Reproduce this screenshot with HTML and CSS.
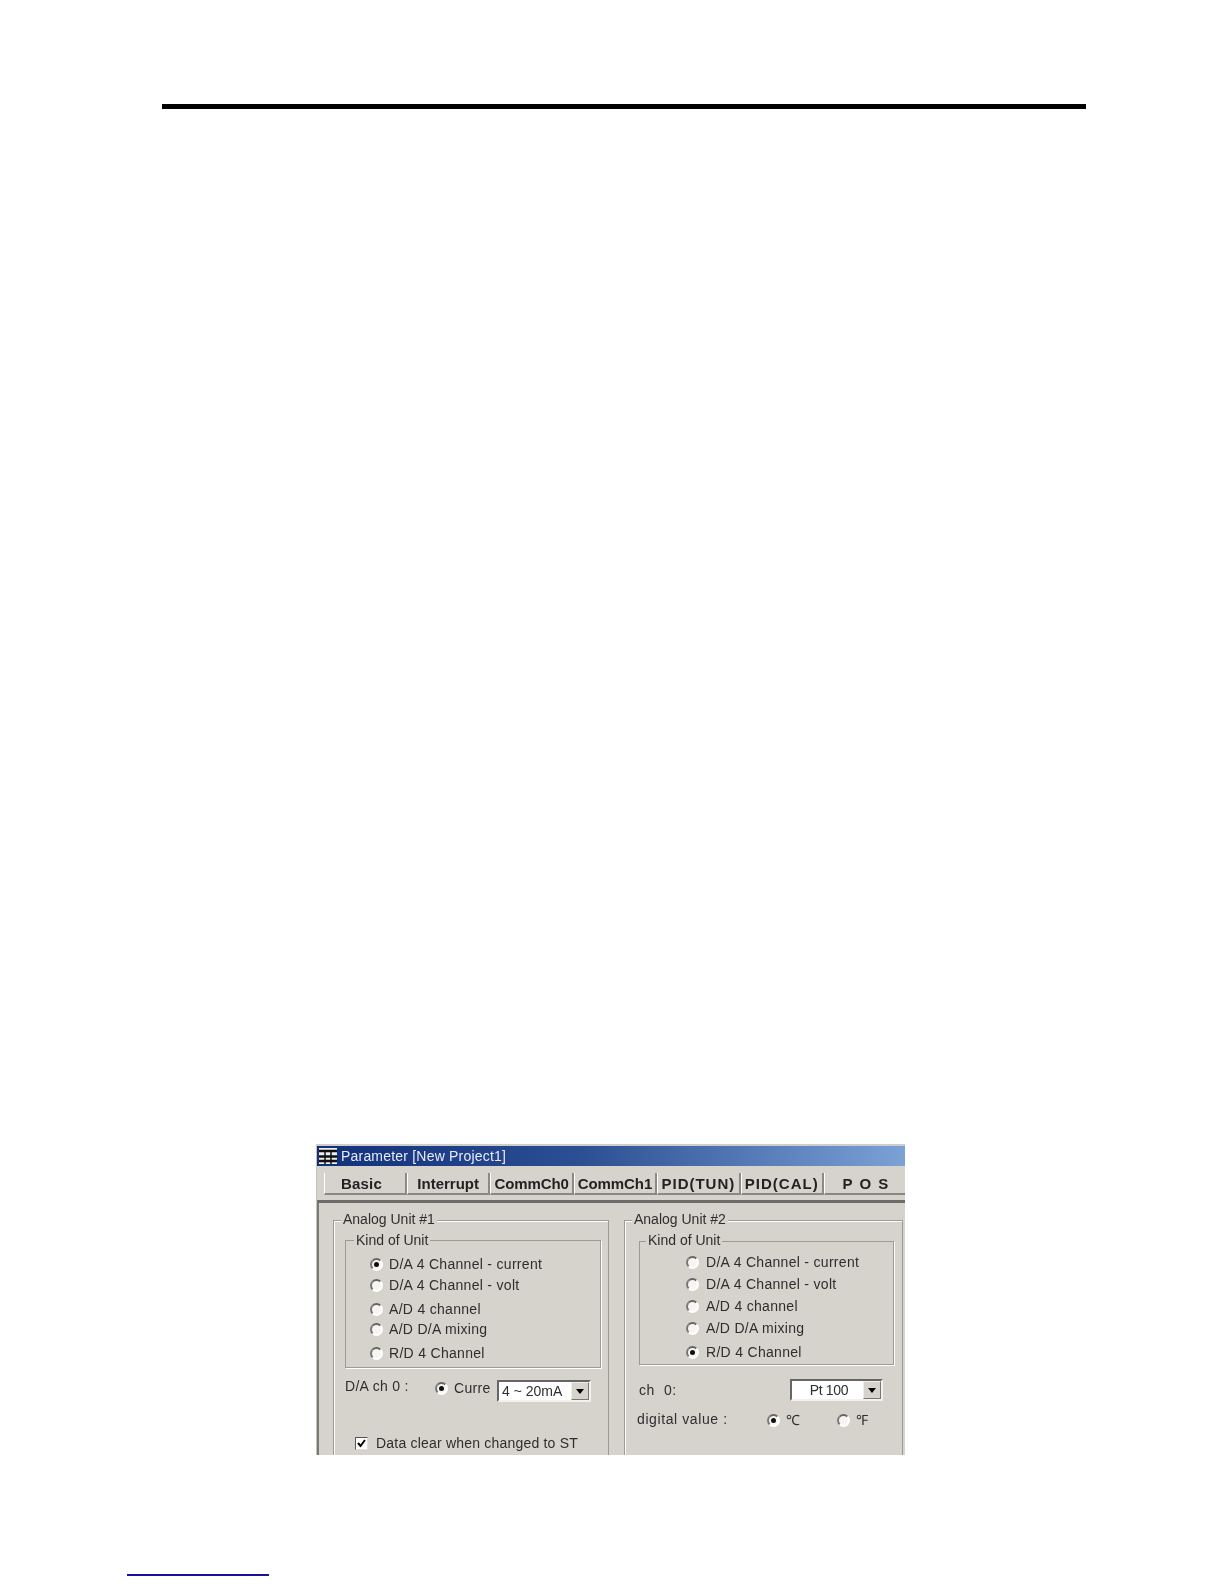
FILE: index.html
```html
<!DOCTYPE html>
<html lang="en">
<head>
<meta charset="utf-8">
<title>Parameter</title>
<link rel="stylesheet" href="styles.css">
</head>
<body>
<div class="page">
  <hr class="head-rule">
  <div class="spacer"></div>
  <div class="dialog">
    <div class="titlebar">
      <svg class="app-icon" width="22" height="20" viewBox="0 0 22 20"><rect width="22" height="20" fill="#12307c"/><rect x="2" y="2" width="18" height="16" fill="#eceeef"/><path d="M2 5h18M2 10.500h18M2 15h18" stroke="#111" stroke-width="2.500" fill="none"/><path d="M8 5v5M14 5v5M8 11v7M14 11v7" stroke="#111" stroke-width="1.500" fill="none"/></svg>
      <span class="title-text">Parameter [New Project1]</span>
    </div>
    <div class="tabs">
      <div class="tab tab-basic">Basic</div>
      <div class="tab">Interrupt</div>
      <div class="tab tab-comm">CommCh0</div>
      <div class="tab tab-comm">CommCh1</div>
      <div class="tab tab-pid">PID(TUN)</div>
      <div class="tab tab-pid">PID(CAL)</div>
      <div class="tab tab-pos">P O S</div>
    </div>
    <div class="panel">
      <div class="unit unit-one">
        <span class="legend legend-unit">Analog Unit #1</span>
        <div class="kind kind-one">
          <span class="legend">Kind of Unit</span>
          <label class="radio-row r1"><i class="radio on"></i>D/A 4 Channel - current</label>
          <label class="radio-row r2"><i class="radio"></i>D/A 4 Channel - volt</label>
          <label class="radio-row r3"><i class="radio"></i>A/D 4 channel</label>
          <label class="radio-row r4"><i class="radio"></i>A/D D/A mixing</label>
          <label class="radio-row r5"><i class="radio"></i>R/D 4 Channel</label>
        </div>
        <div class="ch-row">
          <span class="ch-label">D/A ch 0 :</span>
          <label class="radio-row curr"><i class="radio on"></i>Curre</label>
          <div class="combo combo-one"><span>4 ~ 20mA</span><b class="arrow"></b></div>
        </div>
        <label class="check-row"><i class="check"><svg width="11" height="11" viewBox="0 0 11 11"><path d="M2 5l2.500 3L9 2" fill="none" stroke="#000" stroke-width="2"/></svg></i>Data clear when changed to ST</label>
      </div>
      <div class="unit unit-two">
        <span class="legend legend-unit">Analog Unit #2</span>
        <div class="kind kind-two">
          <span class="legend">Kind of Unit</span>
          <label class="radio-row s1"><i class="radio"></i>D/A 4 Channel - current</label>
          <label class="radio-row s2"><i class="radio"></i>D/A 4 Channel - volt</label>
          <label class="radio-row s3"><i class="radio"></i>A/D 4 channel</label>
          <label class="radio-row s4"><i class="radio"></i>A/D D/A mixing</label>
          <label class="radio-row s5"><i class="radio on"></i>R/D 4 Channel</label>
        </div>
        <div class="pt-row">
          <span class="ch-zero">ch&nbsp; 0:</span>
          <div class="combo combo-two"><span>Pt 100</span><b class="arrow"></b></div>
        </div>
        <div class="dv-row">
          <span class="dv-label">digital value :</span>
          <label class="radio-row deg-c"><i class="radio on"></i>℃</label>
          <label class="radio-row deg-f"><i class="radio"></i>℉</label>
        </div>
      </div>
    </div>
  </div>
  <div class="foot-link"></div>
</div>
</body>
</html>
```
FILE: styles.css
```css
* { box-sizing: border-box; }
html, body { margin: 0; padding: 0; background: #fff; }
body { font-family: "Liberation Sans", Arial, sans-serif; color: #2e2e2e; }
.page { width: 1224px; height: 1584px; padding-top: 104px; overflow: hidden; }
.head-rule { height: 5px; width: 924px; margin: 0 0 0 162px; border: 0; background: #000; }
.spacer { height: 1035px; }
.dialog { width: 589px; height: 311px; margin-left: 316px; background: #d6d3cd; overflow: hidden; border-top: 2px solid #cfcdc8; border-left: 1px solid #c4c2bc; filter: blur(.35px); }
.titlebar { height: 20px; display: flex; align-items: center; gap: 2px; color: #e8ecf6; font-size: 14px; background: linear-gradient(90deg, #12307c 0%, #2c4f94 45%, #7ca1d6 100%); }
.title-text { letter-spacing: .2px; }
.app-icon { flex: none; }
.tabs { display: flex; height: 22px; margin-top: 7px; padding-left: 7px; }
.tab { flex: none; width: 83.400px; display: flex; align-items: center; justify-content: center; font-size: 15px; font-weight: bold; color: #222; border-right: 2px solid #8c8a84; border-left: 1px solid #fff; border-bottom: 2px solid #888; white-space: nowrap; }
.tab-basic { width: 83px; padding-right: 7px; letter-spacing: .2px; }
.tab-comm { letter-spacing: -.1px; }
.tab-pid { letter-spacing: 1px; }
.tab-pos { width: 82px; border-right: 0; word-spacing: 3px; }
.panel { position: relative; height: 256px; margin-top: 5px; border-top: 3px solid #6e6c68; border-left: 2px solid #7a7873; }
.unit { position: absolute; top: 17px; bottom: -20px; border: 1px solid #9c9a94; box-shadow: inset 1px 1px 0 #fff; }
.unit-one { left: 14px; width: 276px; }
.unit-two { left: 305px; width: 279px; }
.legend { position: absolute; top: -9px; left: 8px; padding: 0 2px; background: #d6d3cd; font-size: 14px; line-height: 16px; white-space: nowrap; }
.legend-unit { left: 7px; top: -10px; }
.kind { position: absolute; top: 19px; height: 128px; border: 1px solid #9c9a94; box-shadow: 1px 1px 0 #fff; }
.kind-one { left: 11px; width: 256px; }
.kind-two { left: 14px; top: 20px; width: 255px; height: 124px; }
.kind-two .legend { left: 6px; top: -10px; }
.radio-row { position: absolute; display: flex; align-items: center; gap: 6px; font-size: 14px; line-height: 18px; white-space: nowrap; letter-spacing: .3px; }
.kind-one .radio-row { left: 24px; }
.kind-two .radio-row { left: 46px; gap: 7px; }
.r1 { top: 14px; } .r2 { top: 35px; } .r3 { top: 59px; } .r4 { top: 79px; } .r5 { top: 103px; }
.s1 { top: 11px; } .s2 { top: 33px; } .s3 { top: 55px; } .s4 { top: 77px; } .s5 { top: 101px; }
.radio { width: 13px; height: 13px; flex: none; border-radius: 50%; background: #f6f5f2; border: 2px solid #fff; border-top-color: #666; border-left-color: #777; position: relative; }
.radio.on::after { content: ""; position: absolute; left: 2px; top: 2px; width: 5px; height: 5px; border-radius: 50%; background: #111; }
.ch-row, .pt-row, .dv-row { position: absolute; left: 0; right: 0; top: 0; height: 0; }
.ch-label { position: absolute; left: 11px; top: 156px; font-size: 14px; line-height: 18px; letter-spacing: .3px; }
.curr { left: 101px; top: 158px; }
.combo { position: absolute; background: #fff; border: 2px solid #666; border-right-color: #f2f1ee; border-bottom-color: #f2f1ee; display: flex; align-items: center; font-size: 14px; padding-left: 3px; }
.combo > span { flex: 1; }
.combo-one { left: 163px; top: 159px; width: 94px; height: 22px; }
.combo-two { left: 165px; top: 158px; width: 93px; height: 22px; text-align: center; letter-spacing: -.3px; }
.arrow { width: 18px; height: 18px; flex: none; background: #d6d3cd; border: 1px solid #777; border-top-color: #eee; border-left-color: #eee; position: relative; }
.arrow::after { content: ""; position: absolute; left: 4px; top: 6px; border: 4px solid transparent; border-top: 5px solid #000; border-bottom: 0; }
.check-row { position: absolute; left: 21px; top: 213px; display: flex; align-items: center; gap: 8px; font-size: 14px; line-height: 18px; letter-spacing: .2px; white-space: nowrap; }
.check { width: 13px; height: 13px; background: #fff; border: 1px solid #555; border-right-color: #ddd; border-bottom-color: #ddd; display: flex; }
.ch-zero { position: absolute; left: 14px; top: 160px; font-size: 14px; line-height: 18px; letter-spacing: .6px; }
.dv-label { position: absolute; left: 12px; top: 189px; font-size: 14px; line-height: 18px; letter-spacing: .6px; }
.deg-c { left: 142px; top: 190px; }
.deg-f { left: 212px; top: 190px; }
.foot-link { position: absolute; left: 127px; top: 1574px; width: 142px; height: 2px; background: #14149a; }
```
